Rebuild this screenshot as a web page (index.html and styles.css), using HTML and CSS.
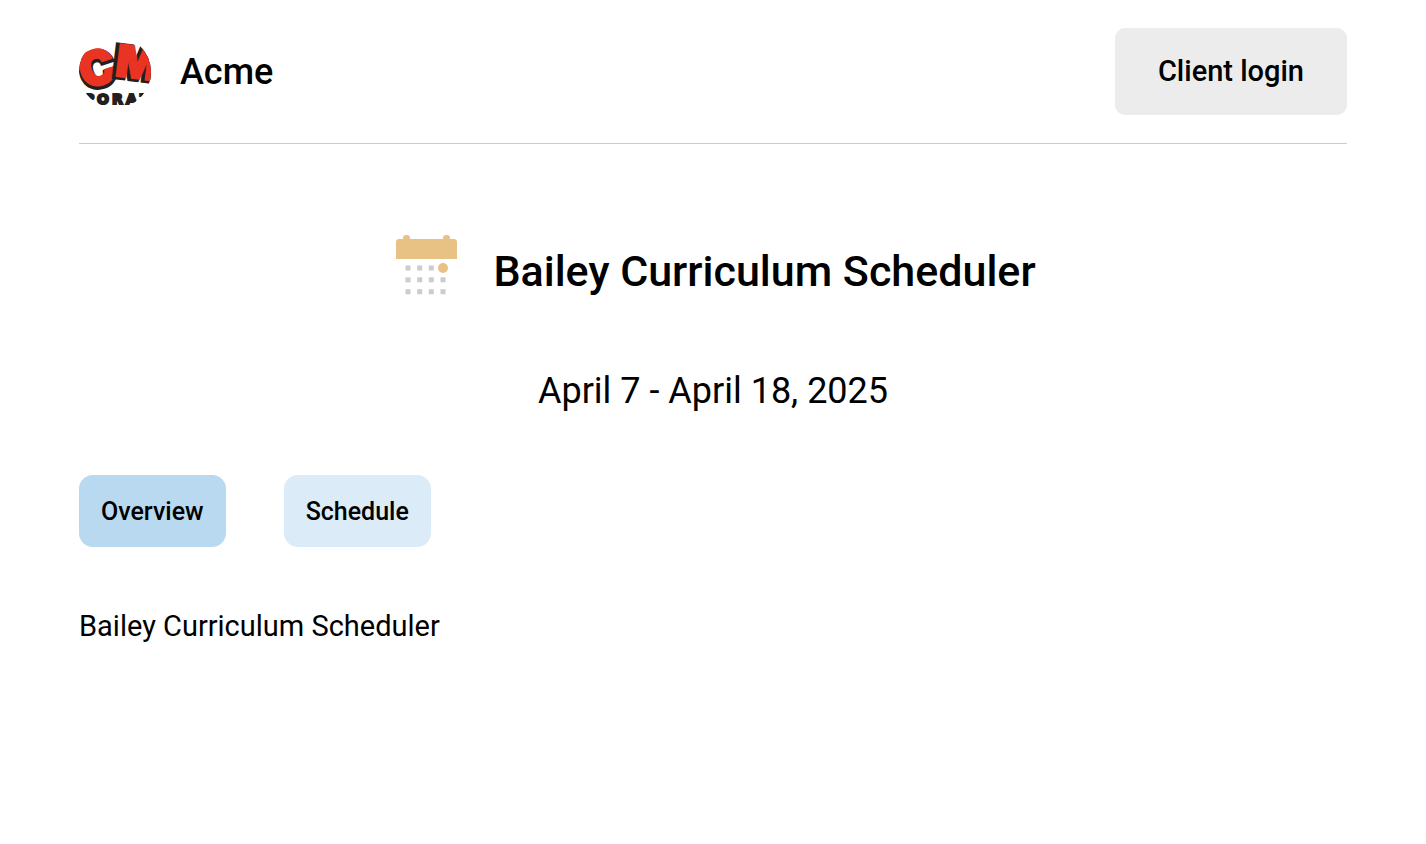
FILE: index.html
```html
<!DOCTYPE html>
<html lang="en">
  <head>
    <meta charset="UTF-8" />
    <meta name="viewport" content="width=device-width, initial-scale=1.0" />
    <title>Bailey Curriculum Scheduler</title>
    <link rel="stylesheet" href="styles.css">
  </head>
  <body>
    <header class="header">
      <div class="brand">
        <svg class="brand-logo" viewBox="0 0 72 72" aria-hidden="true">
          <defs>
            <clipPath id="logo-clip">
              <circle cx="36" cy="36" r="36" />
            </clipPath>
          </defs>
          <g clip-path="url(#logo-clip)">
            <g class="logo-c" transform="rotate(-18 18 32)">
              <text class="logo-shadow" x="0" y="51">C</text>
              <text class="logo-letter" x="0" y="49">C</text>
            </g>
            <g class="logo-m" transform="rotate(7 54 28)">
              <text class="logo-shadow" x="35" y="43">M</text>
              <text class="logo-letter" x="37" y="42">M</text>
            </g>
            <text class="logo-small" x="5 18 33 47 61" y="68">PORAT</text>
          </g>
        </svg>
        <span class="brand-name">Acme</span>
      </div>
      <button class="login-button" type="button">Client login</button>
    </header>

    <main>
      <div class="title-row">
        <svg class="calendar-icon" viewBox="0 0 72 72" aria-hidden="true">
          <g fill="#e8c284">
            <rect x="6" y="10" width="61" height="20" rx="3" />
            <rect x="6" y="18" width="61" height="12" />
            <rect x="13" y="6" width="7" height="10" rx="3" />
            <rect x="53" y="6" width="7" height="10" rx="3" />
            <circle cx="53" cy="39" r="5" />
          </g>
          <g fill="#cccccc">
            <rect x="15.5" y="36.5" width="5" height="5" />
            <rect x="27.2" y="36.5" width="5" height="5" />
            <rect x="38.8" y="36.5" width="5" height="5" />
            <rect x="15.5" y="48.3" width="5" height="5" />
            <rect x="27.2" y="48.3" width="5" height="5" />
            <rect x="38.8" y="48.3" width="5" height="5" />
            <rect x="50.5" y="48.3" width="5" height="5" />
            <rect x="15.5" y="60.2" width="5" height="5" />
            <rect x="27.2" y="60.2" width="5" height="5" />
            <rect x="38.8" y="60.2" width="5" height="5" />
            <rect x="50.5" y="60.2" width="5" height="5" />
          </g>
        </svg>
        <h1 class="title">Bailey Curriculum Scheduler</h1>
      </div>

      <p class="dates">April 7 - April 18, 2025</p>

      <nav class="tabs">
        <button class="tab active" type="button">Overview</button>
        <button class="tab" type="button">Schedule</button>
      </nav>

      <p class="overview">Bailey Curriculum Scheduler</p>
    </main>
  </body>
</html>
```

FILE: styles.css
```css
body {
  margin: 0;
  padding: 0 79px;
  font-family: Roboto, sans-serif;
  color: #000;
  background: #fff;
}

button {
  font-family: inherit;
  font-weight: 500;
  color: #000;
  border: none;
  cursor: pointer;
}

.header {
  display: flex;
  align-items: center;
  justify-content: space-between;
  padding: 28px 0;
  border-bottom: 1px solid #ccc;
}

.brand {
  display: flex;
  align-items: center;
  gap: 29px;
}

.brand-logo {
  width: 72px;
  height: 72px;
}

.logo-c,
.logo-m {
  font-family: Inter, sans-serif;
  font-weight: 900;
}

.logo-c {
  font-size: 48px;
}

.logo-m {
  font-size: 44px;
}

.logo-shadow {
  fill: #231f20;
  stroke: #231f20;
  stroke-width: 5px;
}

.logo-letter {
  fill: #e93323;
  stroke: #e93323;
  stroke-width: 2px;
}

.logo-small {
  font-family: "DejaVu Sans", sans-serif;
  font-size: 14px;
  font-weight: 700;
  fill: #231f20;
  stroke: #231f20;
  stroke-width: 2px;
}

.brand-name {
  font-size: 36px;
  font-weight: 500;
}

.login-button {
  padding: 26px 43px;
  font-size: 29px;
  line-height: 35px;
  background: #ececec;
  border-radius: 10px;
}

.title-row {
  display: flex;
  align-items: flex-start;
  justify-content: center;
  gap: 31px;
  margin-top: 85px;
}

.calendar-icon {
  width: 72px;
  height: 72px;
}

.title {
  margin: 16px 0 0;
  font-size: 43px;
  font-weight: 500;
  line-height: 52px;
}

.dates {
  margin: 69px 0 0;
  font-size: 36px;
  line-height: 43px;
  text-align: center;
}

.tabs {
  display: flex;
  gap: 58px;
  margin-top: 62px;
}

.tab {
  padding: 22px 22px 20px;
  font-size: 25px;
  line-height: 30px;
  background: #dbecf8;
  border-radius: 14px;
}

.tab.active {
  background: #b8d9ef;
}

.overview {
  margin: 62px 0 0;
  font-size: 29px;
  line-height: 35px;
}
```
